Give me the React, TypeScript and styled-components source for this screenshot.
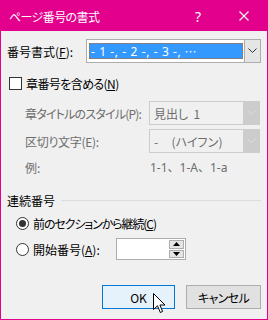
import React from "react";
import styled, { createGlobalStyle } from "styled-components";

const Global = createGlobalStyle`
  html, body { margin: 0; padding: 0; background: #f0f0f0; }
  * { box-sizing: border-box; }
  body {
    font-family: "Noto Sans CJK JP", "Noto Sans", sans-serif;
    font-size: 12px;
    font-feature-settings: "palt";
  }
`;

const Window = styled.div`
  width: 268px;
  height: 320px;
  border: 1px solid #e3008c;
  background: #f0f0f0;
  display: flex;
  flex-direction: column;
  overflow: hidden;
`;

const TitleBar = styled.div`
  height: 30px;
  background: #e3008c;
  color: #fff;
  display: flex;
  align-items: center;
  padding-left: 8px;
  flex-shrink: 0;
`;

const Title = styled.div`
  flex: 1;
  font-size: 12px;
  letter-spacing: -0.6px;
`;

const TitleBtn = styled.div<{ $w: number }>`
  width: ${(p) => p.$w}px;
  height: 30px;
  display: flex;
  align-items: center;
  justify-content: center;
  font-size: 14px;
  font-family: "Noto Sans", sans-serif;
`;

const Body = styled.div`
  flex: 1;
  display: flex;
  flex-direction: column;
  padding: 8px 6px 0 6px;
`;

const FormatRow = styled.div`
  display: flex;
  align-items: center;
  height: 24px;
`;

const Label = styled.span<{ $disabled?: boolean; $w?: number; $ls?: number }>`
  color: ${(p) => (p.$disabled ? "#6d6d6d" : "#000")};
  white-space: nowrap;
  letter-spacing: ${(p) => p.$ls ?? 0}px;
  ${(p) => (p.$w ? `width: ${p.$w}px; flex-shrink: 0;` : "")}
`;

const U = styled.span`
  text-decoration: underline;
  text-underline-offset: 1px;
`;

const Select = styled.div<{ $disabled?: boolean; $w: number }>`
  width: ${(p) => p.$w}px;
  height: 24px;
  border: 1px solid ${(p) => (p.$disabled ? "#cccccc" : "#adadad")};
  background: ${(p) => (p.$disabled ? "#f0f0f0" : "#fff")};
  display: flex;
  align-items: stretch;
`;

const SelectValue = styled.div<{ $disabled?: boolean }>`
  flex: 1;
  display: flex;
  align-items: center;
  padding-left: 4px;
  color: ${(p) => (p.$disabled ? "#6d6d6d" : "#000")};
  white-space: pre;
  overflow: hidden;
`;

const Highlight = styled.div`
  flex: 1;
  margin: 3px 1px 3px 2px;
  background: #3399ff;
  color: #fff;
  outline: 1px dotted #c26a1c;
  outline-offset: -1px;
  display: flex;
  align-items: center;
  padding-left: 2px;
  white-space: nowrap;
  overflow: hidden;
  font-family: "Noto Sans", sans-serif;
  letter-spacing: 0.6px;
`;

const Ellipsis = styled.span`
  font-family: "Noto Sans CJK JP", sans-serif;
  margin-left: 3px;
`;

const DropBtn = styled.div<{ $disabled?: boolean }>`
  width: 16px;
  flex-shrink: 0;
  background: ${(p) => (p.$disabled ? "#cccccc" : "#e5e5e5")};
  border-left: 1px solid ${(p) => (p.$disabled ? "#cccccc" : "#adadad")};
  display: flex;
  align-items: center;
  justify-content: center;
`;

const CheckRow = styled.div`
  display: flex;
  align-items: center;
  margin-top: 13px;
  margin-left: 2px;
  height: 14px;
  gap: 4px;
`;

const CheckBox = styled.div`
  width: 13px;
  height: 13px;
  border: 1px solid #333;
  background: #fff;
`;

const Indented = styled.div`
  display: grid;
  grid-template-columns: 124px 111px;
  grid-template-rows: 24px 24px 20px;
  row-gap: 4px;
  padding-left: 18px;
  margin-top: 11px;
  align-items: center;
`;

const ExampleValue = styled.span`
  color: #6d6d6d;
  padding-left: 1px;
  font-family: "Noto Sans", "Noto Sans CJK JP", sans-serif;
  font-feature-settings: normal;
`;

const GroupHead = styled.div`
  display: flex;
  align-items: center;
  gap: 6px;
  margin-top: 15px;
  height: 16px;
`;

const GroupLine = styled.div`
  flex: 1;
  height: 1px;
  background: #dcdcdc;
`;

const RadioRow = styled.div<{ $mt: number }>`
  display: flex;
  align-items: center;
  margin-top: ${(p) => p.$mt}px;
  margin-left: 9px;
  gap: 4px;
  height: 14px;
`;

const Radio = styled.div<{ $checked?: boolean }>`
  width: 13px;
  height: 13px;
  border-radius: 50%;
  border: 1px solid #333;
  background: #fff;
  display: flex;
  align-items: center;
  justify-content: center;
  &::after {
    content: "";
    display: ${(p) => (p.$checked ? "block" : "none")};
    width: 7px;
    height: 7px;
    border-radius: 50%;
    background: #333;
  }
`;

const SpinBox = styled.div`
  width: 70px;
  height: 22px;
  flex-shrink: 0;
  border: 1px solid #adadad;
  background: #fff;
  display: flex;
  justify-content: flex-end;
  padding: 1px;
`;

const SpinBtns = styled.div`
  width: 15px;
  display: flex;
  flex-direction: column;
  gap: 1px;
`;

const SpinBtn = styled.div`
  flex: 1;
  background: #e5e5e5;
  border: 1px solid #adadad;
  display: flex;
  align-items: center;
  justify-content: center;
`;

const Buttons = styled.div`
  display: flex;
  justify-content: flex-end;
  gap: 11px;
  margin-top: 29px;
`;

const Button = styled.div<{ $primary?: boolean; $w: number }>`
  width: ${(p) => p.$w}px;
  height: 24px;
  border: 1px solid ${(p) => (p.$primary ? "#0078d7" : "#adadad")};
  background: ${(p) => (p.$primary ? "#e5f1fb" : "#e1e1e1")};
  display: flex;
  align-items: center;
  justify-content: center;
  color: #000;
  position: relative;
`;

const Cursor = styled.svg`
  position: absolute;
  left: 50px;
  top: 7px;
`;

const Chevron = ({ color }: { color: string }) => (
  <svg width="9" height="6" viewBox="0 0 9 6">
    <polyline points="0.5,0.5 4.5,4.5 8.5,0.5" fill="none" stroke={color} strokeWidth="1" />
  </svg>
);

const Tri = ({ up }: { up?: boolean }) => (
  <svg width="7" height="4" viewBox="0 0 7 4">
    <polygon points={up ? "0,4 7,4 3.5,0" : "0,0 7,0 3.5,4"} fill="#000" />
  </svg>
);

export default function App() {
  return (
    <>
      <Global />
      <Window>
        <TitleBar>
          <Title>ページ番号の書式</Title>
          <TitleBtn $w={46}>?</TitleBtn>
          <TitleBtn $w={46}>
            <svg width="10" height="10" viewBox="0 0 10 10">
              <path d="M0.5 0.5 L9.5 9.5 M9.5 0.5 L0.5 9.5" stroke="#fff" strokeWidth="1.1" />
            </svg>
          </TitleBtn>
        </TitleBar>
        <Body>
          <FormatRow>
            <Label $w={79}>
              番号書式(<U>F</U>):
            </Label>
            <Select $w={175}>
              <Highlight>
                - 1 -, - 2 -, - 3 -,<Ellipsis>…</Ellipsis>
              </Highlight>
              <DropBtn>
                <Chevron color="#333" />
              </DropBtn>
            </Select>
          </FormatRow>
          <CheckRow>
            <CheckBox />
            <Label $ls={-0.6}>
              章番号を含める(<U>N</U>)
            </Label>
          </CheckRow>
          <Indented>
            <Label $disabled $ls={-0.8}>
              章タイトルのスタイル(P):
            </Label>
            <Select $w={111} $disabled>
              <SelectValue $disabled>{"見出し  1"}</SelectValue>
              <DropBtn $disabled>
                <Chevron color="#e0e0e0" />
              </DropBtn>
            </Select>
            <Label $disabled $ls={-0.3}>
              区切り文字(E):
            </Label>
            <Select $w={111} $disabled>
              <SelectValue $disabled>{"-     (ハイフン)"}</SelectValue>
              <DropBtn $disabled>
                <Chevron color="#e0e0e0" />
              </DropBtn>
            </Select>
            <Label $disabled>例:</Label>
            <ExampleValue>1-1、1-A、1-a</ExampleValue>
          </Indented>
          <GroupHead>
            <Label>連続番号</Label>
            <GroupLine />
          </GroupHead>
          <RadioRow $mt={8}>
            <Radio $checked />
            <Label $ls={-1.1}>
              前のセクションから継続(<U>C</U>)
            </Label>
          </RadioRow>
          <RadioRow $mt={12}>
            <Radio />
            <Label $w={79}>
              開始番号(<U>A</U>):
            </Label>
            <SpinBox>
              <SpinBtns>
                <SpinBtn>
                  <Tri up />
                </SpinBtn>
                <SpinBtn>
                  <Tri />
                </SpinBtn>
              </SpinBtns>
            </SpinBox>
          </RadioRow>
          <Buttons>
            <Button $primary $w={73}>
              OK
              <Cursor width="13" height="21" viewBox="0 0 13 21">
                <path
                  d="M0.5 0.5 L0.5 16.5 L4.5 12.8 L7.3 19.5 L9.6 18.5 L6.9 12 L12 12 Z"
                  fill="#fff"
                  stroke="#000"
                  strokeWidth="1"
                />
              </Cursor>
            </Button>
            <Button $w={75}>
              <Label $ls={-0.6}>キャンセル</Label>
            </Button>
          </Buttons>
        </Body>
      </Window>
    </>
  );
}
